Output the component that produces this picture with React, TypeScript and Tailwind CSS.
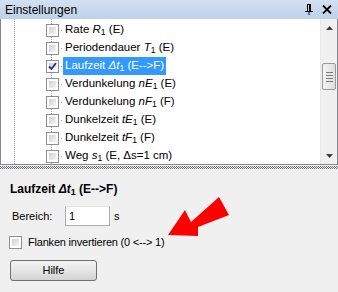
import React from "react";

type Item = {
  label: React.ReactNode;
  checked?: boolean;
  selected?: boolean;
};

const items: Item[] = [
  { label: <>Rate <i>R</i><sub>1</sub> (E)</> },
  { label: <>Periodendauer <i>T</i><sub>1</sub> (E)</> },
  { label: <>Laufzeit <i>Δt</i><sub>1</sub> (E--&gt;F)</>, checked: true, selected: true },
  { label: <>Verdunkelung <i>nE</i><sub>1</sub> (E)</> },
  { label: <>Verdunkelung <i>nF</i><sub>1</sub> (F)</> },
  { label: <>Dunkelzeit <i>tE</i><sub>1</sub> (E)</> },
  { label: <>Dunkelzeit <i>tF</i><sub>1</sub> (F)</> },
  { label: <>Weg <i>s</i><sub>1</sub> (E, Δs=1 cm)</> },
];

// Win7 style checkbox
function Check({ checked }: { checked?: boolean }) {
  return (
    <div className="relative h-[13px] w-[13px] shrink-0 border border-[#8e8f8f] bg-white">
      <div className="absolute inset-[2px] bg-gradient-to-br from-[#cbcfd5] to-[#f6f6f6]" />
      {checked && (
        <svg className="absolute inset-0" width="11" height="11" viewBox="0 0 11 11">
          <path d="M2 5.5 L4.5 8 L9 2" fill="none" stroke="#21366e" strokeWidth="1.8" />
        </svg>
      )}
    </div>
  );
}

function Row({ item }: { item: Item }) {
  return (
    <div className="flex h-[18px] items-center pl-[45px]">
      <Check checked={item.checked} />
      <div className="ml-[2px] h-[1px] w-[1px] bg-[#a0a0a0]" />
      <span
        className={`ml-[1px] flex h-[18px] items-center px-[2px] leading-none ${
          item.selected ? "bg-[#3399ff] text-white" : "text-black"
        }`}
      >
        <span>{item.label}</span>
      </span>
    </div>
  );
}

function ScrollBar() {
  return (
    <div className="flex w-[17px] flex-col bg-[#f0f0f0] border-l border-[#e8e8e8]">
      <div className="flex h-[17px] items-center justify-center">
        <svg width="7" height="4" viewBox="0 0 7 4">
          <path d="M0 4 L3.5 0 L7 4 Z" fill="#404040" />
        </svg>
      </div>
      <div className="h-[27px]" />
      <div className="mx-[1px] flex h-[27px] flex-col items-center justify-center gap-[2px] rounded-[2px] border border-[#9a9a9a] bg-gradient-to-r from-[#f4f4f4] to-[#dedede]">
        <div className="h-[1px] w-[7px] bg-[#7a7a7a]" />
        <div className="h-[1px] w-[7px] bg-[#7a7a7a]" />
        <div className="h-[1px] w-[7px] bg-[#7a7a7a]" />
        <div className="h-[1px] w-[7px] bg-[#7a7a7a]" />
      </div>
      <div className="flex-1" />
      <div className="flex h-[17px] items-center justify-center">
        <svg width="7" height="4" viewBox="0 0 7 4">
          <path d="M0 0 L3.5 4 L7 0 Z" fill="#404040" />
        </svg>
      </div>
    </div>
  );
}

export default function App() {
  return (
    <div className="relative flex h-[292px] w-[338px] flex-col overflow-hidden bg-[#f0f0f0] font-['Liberation_Sans',Arial,sans-serif] text-[11px] text-black">
      {/* Title bar */}
      <div className="flex h-[19px] items-center bg-gradient-to-b from-[#d3e1f2] to-[#bed1e8] pl-[5px] pr-[6px]">
        <span className="flex-1 text-[12px] leading-none text-black">Einstellungen</span>
        <svg width="8" height="11" viewBox="0 0 8 11" className="mr-[9px]">
          <path d="M0 7.5 H8 M2 0.5 H6 M2.5 0.5 V7.5 M5.5 0.5 V7.5 M4 7.5 V11" stroke="#000" strokeWidth="1" fill="none" />
          <rect x="4" y="1" width="1.5" height="6.5" fill="#000" />
        </svg>
        <svg width="10" height="9" viewBox="0 0 10 9">
          <path d="M1 0.5 L9 8.5 M9 0.5 L1 8.5" stroke="#000" strokeWidth="1.8" />
        </svg>
      </div>

      {/* Tree list */}
      <div className="flex h-[146px] border border-t-0 border-[#828790] bg-white">
        <div className="relative flex-1 overflow-hidden pt-[2px] text-[11.5px]">
          <div className="absolute bottom-0 left-[13px] top-0 border-l border-dotted border-[#a0a0a0]" />
          <div className="absolute bottom-0 left-[50px] top-0 border-l border-dotted border-[#a0a0a0]" />
          <div className="relative">
            {items.map((item, i) => (
              <Row key={i} item={item} />
            ))}
          </div>
        </div>
        <ScrollBar />
      </div>

      {/* Splitter */}
      <div className="mt-[1px] h-[1px] bg-[repeating-linear-gradient(90deg,#6d6d6d_0_1px,#f0f0f0_1px_2px)]" />
      <div className="h-[1px] bg-[repeating-linear-gradient(90deg,#f0f0f0_0_1px,#6d6d6d_1px_2px)]" />
      <div className="h-[1px] bg-[repeating-linear-gradient(90deg,#6d6d6d_0_1px,#f0f0f0_1px_2px)]" />

      {/* Properties */}
      <div className="flex flex-col pl-[10px]">
        <div className="mt-[12px] text-[12px] font-bold leading-[16px]">
          Laufzeit <i>Δt</i>
          <sub>1</sub> (E--&gt;F)
        </div>
        <div className="mt-[9px] flex h-[20px] items-center">
          <span className="ml-[2px] w-[53px]">Bereich:</span>
          <div className="flex h-[20px] w-[45px] items-center border border-[#abadb3] border-t-[#e3e3e3] bg-white pl-[3px]">
            1
          </div>
          <span className="ml-[4px]">s</span>
        </div>
        <div className="mt-[10px] flex h-[13px] items-center">
          <div className="-ml-[1px]">
            <Check />
          </div>
          <span className="ml-[6px] tracking-[-0.2px]">Flanken invertieren (0 &lt;--&gt; 1)</span>
        </div>
        <button className="mt-[11px] flex h-[21px] w-[87px] items-center justify-center rounded-[3px] border border-[#707070] bg-gradient-to-b from-[#f2f2f2] via-[#e6e6e6] to-[#d2d2d2] text-[11px] leading-none">
          Hilfe
        </button>
      </div>

      {/* Red annotation arrow */}
      <svg className="absolute left-0 top-0" width="338" height="292" viewBox="0 0 338 292">
        <path
          d="M168 235 L185 210 L191 222 L219 197 L229 215 L198 227 L198 236 Z"
          fill="#ff0000"
        />
      </svg>
    </div>
  );
}
